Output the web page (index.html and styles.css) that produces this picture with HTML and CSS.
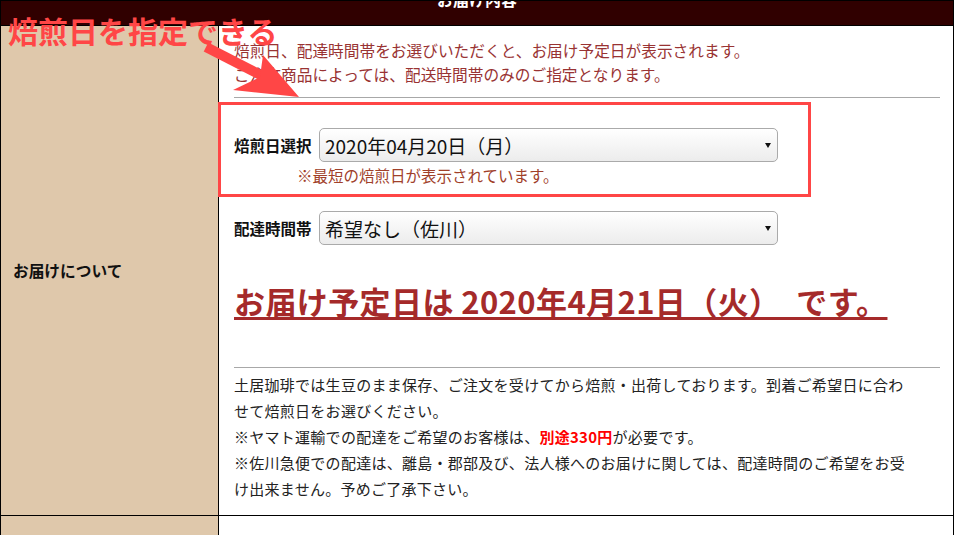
FILE: index.html
```html
<!DOCTYPE html>
<html lang="ja">
<head>
    <meta charset="UTF-8">
    <meta name="viewport" content="width=device-width, initial-scale=1.0">
    <title>お届けについて</title>
    <link rel="stylesheet" href="styles.css">
</head>
<body>

<div class="page">
    <table class="order-table">
        <tr>
            <th colspan="2" class="table-head"><span>お届け内容</span></th>
        </tr>
        <tr>
            <td class="label-cell">お届けについて</td>
            <td class="value-cell">
                <!-- 説明 -->
                <p class="lead">焙煎日、配達時間帯をお選びいただくと、お届け予定日が表示されます。<br>ご注文商品によっては、配送時間帯のみのご指定となります。</p>
                <hr>

                <div class="form-row first">
                    <label for="roastDate">焙煎日選択</label>
                    <span class="select-wrap">
                        <select id="roastDate">
                            <option>2020年04月20日（月）</option>
                        </select>
                    </span>
                </div>
                <p class="hint">※最短の焙煎日が表示されています。</p>

                <div class="form-row">
                    <label for="timeSlot">配達時間帯</label>
                    <span class="select-wrap">
                        <select id="timeSlot">
                            <option>希望なし（佐川）</option>
                        </select>
                    </span>
                </div>

                <p class="arrival"><span>お届け予定日は 2020年4月21日（火）　です。</span></p>
                <hr>

                <div class="notes">
                    <p>土居珈琲では生豆のまま保存、ご注文を受けてから焙煎・出荷しております。到着ご希望日に合わせて焙煎日をお選びください。</p>
                    <p>※ヤマト運輸での配達をご希望のお客様は、<strong>別途330円</strong>が必要です。</p>
                    <p>※佐川急便での配達は、離島・郡部及び、法人様へのお届けに関しては、配達時間のご希望をお受け出来ません。予めご了承下さい。</p>
                </div>
            </td>
        </tr>
        <tr>
            <td class="label-cell"></td>
            <td class="value-cell empty"></td>
        </tr>
    </table>

    <!-- 注釈 -->
    <div class="callout-text">焙煎日を指定できる</div>
    <svg class="callout-arrow" width="120" height="70" viewBox="0 0 120 70">
        <line x1="8" y1="7" x2="76" y2="42" stroke="#ff4646" stroke-width="10"/>
        <polygon points="65,15 101,57 35,50 62,37" fill="#ff4646"/>
    </svg>
    <div class="callout-box"></div>
</div>

</body>
</html>
```

FILE: styles.css
```css
body {
    margin: 0;
    padding: 0;
    font-family: 'Noto Sans CJK JP', sans-serif;
    background-color: white;
    color: #222;
}

.page {
    position: relative;
    width: 962px;
    height: 535px;
    overflow: hidden;
}

.order-table {
    width: 954px;
    border-collapse: collapse;
}

.table-head {
    height: 24px;
    padding: 0;
    background-color: #300000;
    border: 1px solid #000;
    color: white;
    font-size: 16px;
    line-height: 16px;
    vertical-align: top;
    overflow: hidden;
}

.table-head span {
    display: block;
    margin-top: -10px;
    height: 16px;
}

.label-cell {
    width: 205px;
    padding: 0 0 0 12px;
    background-color: #dfc8ab;
    border: 1px solid #000;
    font-size: 15.7px;
    font-weight: bold;
    color: #111;
    vertical-align: middle;
}

.value-cell {
    padding: 13px 13px 13px 15px;
    border: 1px solid #000;
    vertical-align: top;
}

.value-cell.empty {
    height: 40px;
}

.lead {
    margin: 0;
    font-size: 15.7px;
    line-height: 24px;
    color: #993333;
}

hr {
    margin: 10px 0 0;
    border: 0;
    border-top: 1px solid #a8a8a8;
}

.form-row {
    display: flex;
    align-items: center;
    gap: 5px;
}

.form-row.first {
    margin-top: 30px;
}

.form-row label {
    width: 80px;
    font-size: 15.5px;
    font-weight: bold;
    color: #111;
}

.select-wrap {
    position: relative;
    display: block;
}

.select-wrap::after {
    content: '';
    position: absolute;
    right: 7px;
    top: 15px;
    border-left: 3px solid transparent;
    border-right: 3px solid transparent;
    border-top: 5px solid #111;
}

select {
    appearance: none;
    -webkit-appearance: none;
    width: 459px;
    height: 34px;
    padding: 0 24px 0 5px;
    border: 1px solid #aaa;
    border-radius: 5px;
    background: linear-gradient(#ffffff, #ececec);
    font-family: 'Noto Sans CJK JP', sans-serif;
    font-size: 19px;
    color: #111;
}

.hint {
    margin: 0 0 0 63px;
    height: 49px;
    font-size: 15.5px;
    line-height: 26px;
    color: #a0402a;
}

.arrival {
    margin: 36px 0 0;
    font-size: 31px;
    font-weight: bold;
    letter-spacing: 0.4px;
    line-height: 40px;
    color: #a52a2a;
}

.arrival span {
    text-decoration: underline;
    text-decoration-thickness: 3px;
    text-underline-offset: 3px;
}

.arrival + hr {
    margin-top: 46px;
}

.notes {
    width: 680px;
    margin-top: 4px;
    font-size: 15px;
    letter-spacing: 0.27px;
    line-height: 26px;
    color: #222;
}

.notes p {
    margin: 0;
}

.notes strong {
    color: #ff0000;
}

.callout-text {
    position: absolute;
    left: 8px;
    top: 10px;
    font-size: 30px;
    font-weight: bold;
    line-height: 40px;
    color: #ff4646;
}

.callout-arrow {
    position: absolute;
    left: 198px;
    top: 40px;
}

.callout-box {
    position: absolute;
    left: 218px;
    top: 102px;
    width: 587px;
    height: 89px;
    border: 3px solid #ff4646;
}
```
